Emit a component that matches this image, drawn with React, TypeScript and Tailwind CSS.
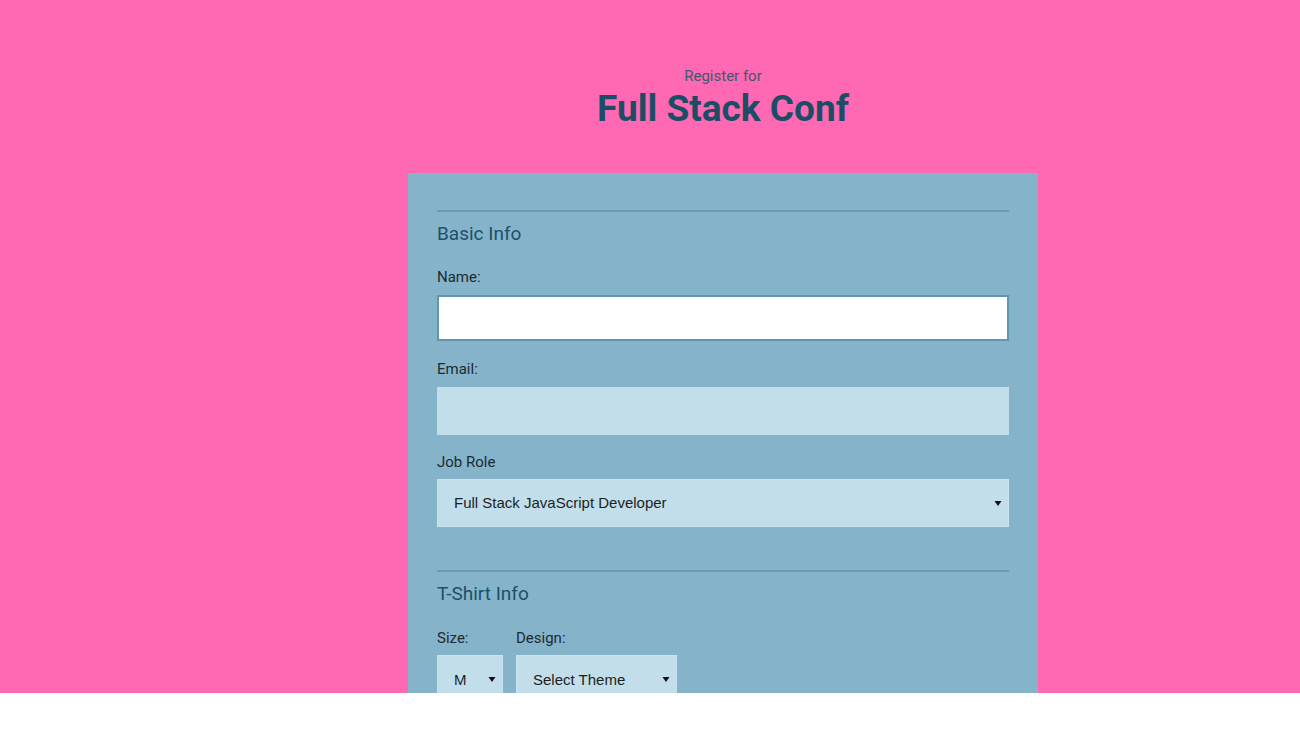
import React from "react";

const Arrow = () => (
  <svg width="8" height="8" viewBox="0 0 8 8" className="shrink-0">
    <path d="M0.5 2 L7.5 2 L4 7 Z" fill="#111" />
  </svg>
);

export default function App() {
  const roboto = { fontFamily: "Roboto, 'Noto Sans', sans-serif" };
  const arial = { fontFamily: "'Liberation Sans', Arial, sans-serif" };
  return (
    <div className="w-full">
      <div className="h-[693px] bg-[#ff68b2] overflow-hidden" style={roboto}>
        <header className="ml-[408px] w-[630px] pt-[66px] text-center">
          <p className="text-[15px] leading-[20px] text-[#3c5a6e]">Register for</p>
          <h1 className="mt-[1px] text-[37px] leading-[44px] font-bold text-[#1a4e66]">Full Stack Conf</h1>
        </header>
        <form className="ml-[408px] mt-[42px] w-[630px] bg-[#85b4ca] px-[29px] pt-[37px] pb-10">
          <div className="h-[2px] bg-[#6a9db5]" />
          <h2 className="mt-[10px] text-[19px] leading-[24px] font-normal text-[#1d5069]">Basic Info</h2>
          <label className="block mt-[21px] text-[15px] leading-[20px] text-[#1e2a31]">Name:</label>
          <div className="mt-[8px] h-[46px] bg-white border-2 border-[#5f97b0]" />
          <label className="block mt-[18px] text-[15px] leading-[20px] text-[#1e2a31]">Email:</label>
          <div className="mt-[8px] h-[48px] bg-[#c1deea]" />
          <label className="block mt-[17px] text-[15px] leading-[20px] text-[#1e2a31]">Job Role</label>
          <div className="mt-[7px] h-[48px] bg-[#c1deea] border border-[#cbe3ee] flex items-center justify-between pl-[16px] pr-[6px] text-[15px] text-[#1b1f22]" style={arial}>
            <span>Full Stack JavaScript Developer</span>
            <Arrow />
          </div>
          <div className="mt-[43px] h-[2px] bg-[#6a9db5]" />
          <h2 className="mt-[10px] text-[19px] leading-[24px] font-normal text-[#1d5069]">T-Shirt Info</h2>
          <div className="mt-[22px] flex gap-[13px]">
            <div className="flex flex-col">
              <label className="text-[15px] leading-[20px] text-[#1e2a31]">Size:</label>
              <div className="mt-[7px] h-[48px] w-[66px] bg-[#c1deea] border border-[#cbe3ee] flex items-center justify-between pl-[16px] pr-[6px] text-[15px] text-[#1b1f22]" style={arial}>
                <span className="mt-[2px]">M</span>
                <Arrow />
              </div>
            </div>
            <div className="flex flex-col">
              <label className="text-[15px] leading-[20px] text-[#1e2a31]">Design:</label>
              <div className="mt-[7px] h-[48px] w-[161px] bg-[#c1deea] border border-[#cbe3ee] flex items-center justify-between pl-[16px] pr-[6px] text-[15px] text-[#1b1f22]" style={arial}>
                <span className="mt-[2px]">Select Theme</span>
                <Arrow />
              </div>
            </div>
          </div>
        </form>
      </div>
    </div>
  );
}
